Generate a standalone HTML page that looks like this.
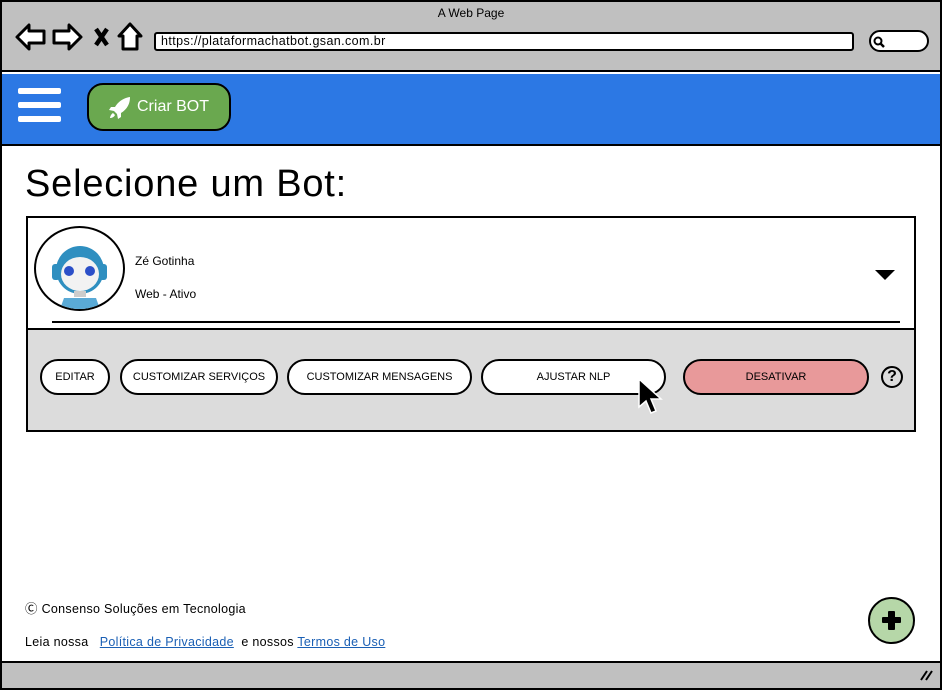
<!DOCTYPE html>
<html><head><meta charset="utf-8"><style>
*{box-sizing:border-box;margin:0;padding:0}
body{width:942px;height:690px;position:relative;overflow:hidden;background:#fff;font-family:"Liberation Sans",sans-serif;color:#000}
.a{position:absolute}
.btn{position:absolute;top:359px;height:36px;border:2px solid #000;border-radius:18px;background:#fff;font-size:11px;display:flex;align-items:center;justify-content:center}
</style></head><body>
<div class="a" style="left:0;top:0;width:942px;height:690px;border:2px solid #000"></div>
<div class="a" style="left:2px;top:2px;width:938px;height:70px;background:#c0c0c0;border-bottom:2px solid #000"></div>
<div class="a" style="left:0;top:6px;width:942px;text-align:center;font-size:12px">A Web Page</div>
<svg class="a" style="left:14px;top:20px" width="132" height="34" viewBox="0 0 132 34">
<path d="M3 17 L15 5 L15 11 L30 11 L30 23 L15 23 L15 29 Z" fill="#fff" stroke="#000" stroke-width="3" stroke-linejoin="round"/>
<path d="M67 17 L55 5 L55 11 L40 11 L40 23 L55 23 L55 29 Z" fill="#fff" stroke="#000" stroke-width="3" stroke-linejoin="round"/>
<path d="M82 9 L93 25 M93 9 L82 25" stroke="#000" stroke-width="4.5"/>
<path d="M116 4 L105 16 L109 16 L109 29 L123 29 L123 16 L127 16 Z" fill="#fff" stroke="#000" stroke-width="3" stroke-linejoin="round"/>
</svg>
<div class="a" style="left:154px;top:32px;width:700px;height:19px;background:#fff;border:2px solid #000;border-radius:3px;font-size:12.5px;letter-spacing:0.4px;padding-left:5px;line-height:15px">https://plataformachatbot.gsan.com.br</div>
<div class="a" style="left:869px;top:30px;width:60px;height:22px;background:#fff;border:2px solid #000;border-radius:11px"></div>
<svg class="a" style="left:872px;top:35px" width="14" height="14"><circle cx="6" cy="6" r="3.5" fill="none" stroke="#000" stroke-width="2"/><path d="M8.5 8.5 L12 12" stroke="#000" stroke-width="2.5"/></svg>
<div class="a" style="left:2px;top:74px;width:938px;height:72px;background:#2c78e4;border-bottom:2px solid #000"></div>
<div class="a" style="left:18px;top:88px;width:43px;height:6px;background:#fff;border-radius:2px"></div>
<div class="a" style="left:18px;top:102px;width:43px;height:6px;background:#fff;border-radius:2px"></div>
<div class="a" style="left:18px;top:116px;width:43px;height:6px;background:#fff;border-radius:2px"></div>
<div class="a" style="left:87px;top:83px;width:144px;height:48px;background:#6aa84f;border:2px solid #000;border-radius:16px;color:#fff;font-size:16px;display:flex;align-items:center;padding-left:48px">Criar BOT</div>
<svg class="a" style="left:108px;top:96px" width="24" height="24" viewBox="0 0 24 24"><path d="M22 1 C15 2 10 6 7 11 L3 11 L1 14 L6 15 L9 18 L10 23 L13 21 L13 17 C18 14 22 9 22 1 Z M5 17 C3 18 2 21 2 22 C4 22 6 21 7 19 Z" fill="#fff"/></svg>
<div class="a" style="left:25px;top:163px;font-size:38px;letter-spacing:0.8px">Selecione um Bot:</div>
<div class="a" style="left:26px;top:216px;width:890px;height:216px;border:2px solid #000;background:#fff"></div>
<div class="a" style="left:28px;top:328px;width:886px;height:102px;background:#dcdcdc;border-top:2px solid #000"></div>
<div class="a" style="left:52px;top:321px;width:848px;height:2px;background:#000"></div>
<div class="a" style="left:34px;top:226px;width:91px;height:85px;border:2px solid #000;border-radius:50%;background:#fff;overflow:hidden">
<svg width="87" height="81" viewBox="0 0 87 81"><ellipse cx="44" cy="42" rx="24" ry="24" fill="#2f8fc0"/><rect x="16" y="36" width="8" height="16" rx="3" fill="#2f8fc0"/><rect x="63" y="36" width="8" height="16" rx="3" fill="#2f8fc0"/><ellipse cx="44" cy="46" rx="19" ry="17" fill="#f2f2f2"/><circle cx="33" cy="43" r="5" fill="#2b4fc8"/><circle cx="54" cy="43" r="5" fill="#2b4fc8"/><path d="M28 70 L60 70 L64 81 L24 81 Z" fill="#5aaad6"/><rect x="38" y="63" width="12" height="6" fill="#ccc"/></svg></div>
<div class="a" style="left:135px;top:254px;font-size:12px">Zé Gotinha</div>
<div class="a" style="left:135px;top:287px;font-size:12px">Web - Ativo</div>
<svg class="a" style="left:874px;top:269px" width="22" height="12"><path d="M1 1 L21 1 L11 11 Z" fill="#000"/></svg>
<div class="btn" style="left:40px;width:70px">EDITAR</div>
<div class="btn" style="left:120px;width:158px">CUSTOMIZAR SERVIÇOS</div>
<div class="btn" style="left:287px;width:185px">CUSTOMIZAR MENSAGENS</div>
<div class="btn" style="left:481px;width:185px">AJUSTAR NLP</div>
<div class="btn" style="left:683px;width:186px;background:#e8999a">DESATIVAR</div>
<div class="a" style="left:881px;top:366px;width:22px;height:22px;border:2.5px solid #000;border-radius:50%;font-size:16px;font-weight:bold;text-align:center;line-height:18px">?</div>
<svg class="a" style="left:637px;top:377px" width="26" height="38" viewBox="0 0 26 38"><path d="M2 2 L2 30 L9 24 L14 36 L19 34 L14 22 L24 22 Z" fill="#000" stroke="#fff" stroke-width="1.5"/></svg>
<div class="a" style="left:25px;top:598px;font-size:12.5px;letter-spacing:0.3px">Ⓒ Consenso Soluções em Tecnologia</div>
<div class="a" style="left:25px;top:635px;font-size:12.5px;letter-spacing:0.3px">Leia nossa &nbsp;&nbsp;<span style="color:#1a5fb4;text-decoration:underline">Política de Privacidade</span> &nbsp;e nossos <span style="color:#1a5fb4;text-decoration:underline">Termos de Uso</span></div>
<div class="a" style="left:868px;top:597px;width:47px;height:47px;border:2.5px solid #000;border-radius:50%;background:#b6d7a8"></div>
<div class="a" style="left:882px;top:617px;width:19px;height:6px;background:#000;border-radius:1px"></div>
<div class="a" style="left:888px;top:611px;width:7px;height:19px;background:#000;border-radius:1px"></div>
<div class="a" style="left:2px;top:661px;width:938px;height:27px;background:#c0c0c0;border-top:2px solid #000"></div>
<svg class="a" style="left:918px;top:668px" width="16" height="14"><path d="M3 12 L9 3 M8 12 L14 3" stroke="#000" stroke-width="2"/></svg>
</body></html>
